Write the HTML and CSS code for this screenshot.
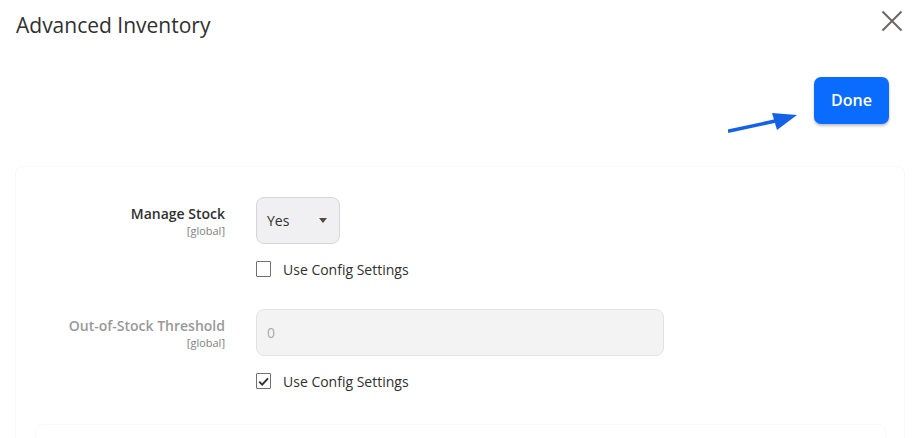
FILE: index.html
```html
<!DOCTYPE html>
<html lang="en">
<head>
<meta charset="utf-8">
<title>Advanced Inventory</title>
<link rel="stylesheet" href="styles.css">
</head>
<body>
<div class="modal">
  <header class="modal-header">
    <h1 class="modal-title">Advanced Inventory</h1>
    <button class="close" type="button" aria-label="Close">
      <svg width="22" height="22" viewBox="0 0 22 22"><path d="M1.5 1.5 L20.5 20.5 M20.5 1.5 L1.5 20.5" stroke="#6e6660" stroke-width="2" fill="none"/></svg>
    </button>
  </header>
  <div class="actions">
    <button class="done" type="button">Done</button>
  </div>
  <section class="panel">
    <div class="field">
      <div class="label">
        <span class="label-text">Manage Stock</span>
        <span class="scope">[global]</span>
      </div>
      <div class="control">
        <div class="select"><span>Yes</span><span class="caret"></span></div>
        <label class="check"><span class="box"></span><span>Use Config Settings</span></label>
      </div>
    </div>
    <div class="field">
      <div class="label disabled">
        <span class="label-text">Out-of-Stock Threshold</span>
        <span class="scope">[global]</span>
      </div>
      <div class="control">
        <div class="input">0</div>
        <label class="check"><span class="box checked"><svg width="13" height="13" viewBox="0 0 13 13"><path d="M2.2 6.6 L5.2 9.6 L11 3.4" stroke="#333" stroke-width="2" fill="none"/></svg></span><span>Use Config Settings</span></label>
      </div>
    </div>
    <div class="subpanel"></div>
  </section>
  <svg class="arrow" width="80" height="30" viewBox="0 0 80 30">
    <path d="M1 22 L52 11" stroke="#1463e6" stroke-width="3.5" stroke-linecap="round" fill="none"/>
    <path d="M44 4 L69 6 L49 21 Z" fill="#1463e6"/>
  </svg>
</div>
</body>
</html>
```

FILE: styles.css
```css
* { box-sizing: border-box; }
html, body { margin: 0; padding: 0; background: #fff; }
body {
  font-family: "Open Sans", "Liberation Sans", sans-serif;
  color: #303030;
  width: 923px;
  height: 438px;
  overflow: hidden;
}
.modal { position: relative; height: 438px; overflow: hidden; }
.modal-header {
  display: flex;
  justify-content: space-between;
  align-items: flex-start;
  padding: 11px 20px 0 16px;
  height: 40px;
}
.modal-title {
  margin: 0;
  font-size: 21px;
  font-weight: 400;
  line-height: 28px;
  color: #303030;
}
.close {
  border: 0;
  background: none;
  padding: 0;
  margin-top: -1px;
  width: 22px;
  height: 22px;
  cursor: pointer;
}
.close svg { display: block; }
.actions {
  display: flex;
  justify-content: flex-end;
  padding: 37px 34px 0 0;
}
.done {
  width: 75px;
  height: 47px;
  border: 0;
  border-radius: 7px;
  background: #0a6cff;
  color: #fff;
  font-family: inherit;
  font-size: 16px;
  font-weight: 600;
  line-height: 20px;
  box-shadow: 0 2px 3px rgba(0,0,0,0.25);
  padding: 0 0 2px;
}
.panel {
  position: relative;
  margin: 42px 18px 0 15px;
  height: 272px;
  border: 1px solid #f8f8f8;
  border-bottom: 0;
  border-radius: 8px 8px 0 0;
  background: #fff;
  padding-top: 30px;
}
.field {
  display: grid;
  grid-template-columns: 209px 1fr;
  column-gap: 31px;
  margin-bottom: 31px;
}
.label {
  display: flex;
  flex-direction: column;
  align-items: flex-end;
  padding-top: 7px;
}
.label-text {
  font-size: 14px;
  font-weight: 600;
  line-height: 19px;
}
.scope {
  font-size: 11px;
  line-height: 15px;
  color: #808080;
}
.label.disabled .label-text { color: #999; }
.control {
  display: flex;
  flex-direction: column;
  align-items: flex-start;
}
.select {
  width: 84px;
  height: 47px;
  border: 1px solid #d6d6d6;
  border-radius: 8px;
  background: #f0f0f3;
  display: flex;
  align-items: center;
  justify-content: space-between;
  padding: 0 12px 0 10px;
  font-size: 14px;
  color: #303030;
}
.caret {
  width: 0;
  height: 0;
  border-left: 4px solid transparent;
  border-right: 4px solid transparent;
  border-top: 5px solid #514943;
}
.input {
  width: 408px;
  height: 47px;
  border: 1px solid #e3e3e3;
  border-radius: 8px;
  background: #f3f3f3;
  display: flex;
  align-items: center;
  padding-left: 10px;
  font-size: 14px;
  color: #aaa;
}
.check {
  display: flex;
  align-items: center;
  gap: 12px;
  margin-top: 16px;
  height: 18px;
  font-size: 14px;
  color: #303030;
}
.box {
  width: 15px;
  height: 16px;
  border: 1px solid #707070;
  border-radius: 1px;
  background: #fff;
  display: flex;
  align-items: center;
  justify-content: center;
}
.box svg { display: block; }
.subpanel {
  position: absolute;
  left: 19px;
  right: 18px;
  top: 257px;
  height: 20px;
  border: 1px solid #f9f9f9;
  border-bottom: 0;
  border-radius: 8px 8px 0 0;
}
.arrow {
  position: absolute;
  left: 728px;
  top: 109px;
}
```
